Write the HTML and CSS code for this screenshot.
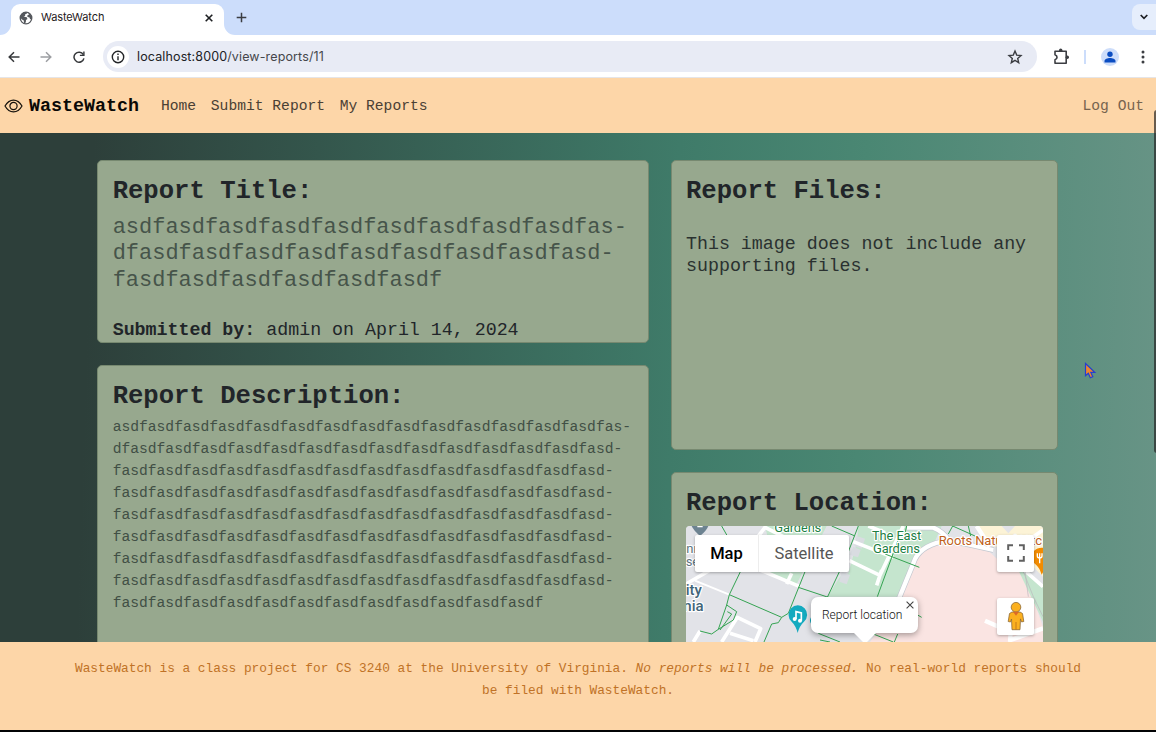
FILE: index.html
```html
<!DOCTYPE html>
<html lang="en">
<head>
<meta charset="utf-8">
<title>WasteWatch</title>
<link rel="stylesheet" href="styles.css">
</head>
<body>
<div class="tabstrip">
  <svg class="curve" width="11" height="11" viewBox="0 0 11 11"><path d="M11 0v11H0A11 11 0 0 0 11 0z" fill="#fff"/></svg>
  <div class="tab">
    <svg width="14" height="14" viewBox="0 0 14 14"><circle cx="7" cy="7" r="5.800" fill="#fff" stroke="#54575c" stroke-width="1.300"/><path d="M1 6.500C1.500 3 4 1 7.500 1L8 2.500 6 3.500 6.200 5 4.500 6H7.500L8.500 8 7 9 6.800 11.500 5 12.500 4.800 9.500 3 8.500zM9.500 1.800L12.500 5 12.800 8.500 11 8 10.500 6.500 8.500 6 8.200 4.500 9.800 3.800z" fill="#54575c"/></svg>
    <span class="tab-title">WasteWatch</span>
    <svg width="10" height="10" viewBox="0 0 10 10"><path d="M1.700 1.700l6.600 6.600M8.300 1.700L1.700 8.300" stroke="#1d1f22" stroke-width="1.600"/></svg>
  </div>
  <svg class="curve" width="11" height="11" viewBox="0 0 11 11"><path d="M0 0v11h11A11 11 0 0 1 0 0z" fill="#fff"/></svg>
  <svg class="plus" width="11" height="11" viewBox="0 0 11 11"><path d="M5.500.7v9.600M.7 5.500h9.600" stroke="#3b3d42" stroke-width="1.500"/></svg>
  <div class="tab-search"><svg width="10" height="8" viewBox="0 0 10 8"><path d="M1.700 2l3.300 3.300L8.300 2" fill="none" stroke="#1d1f22" stroke-width="1.700"/></svg></div>
</div>
<div class="toolbar">
  <svg class="back" width="12" height="12" viewBox="0 0 12 12"><path d="M11.500 6H1.500M6 1.200L1.200 6 6 10.800" fill="none" stroke="#36383b" stroke-width="1.500"/></svg>
  <svg class="forward" width="12" height="12" viewBox="0 0 12 12"><path d="M.5 6h10M6 1.200L10.800 6 6 10.800" fill="none" stroke="#9c9ea2" stroke-width="1.500"/></svg>
  <svg class="reload" width="12" height="12" viewBox="0 0 12 12"><path d="M10.300 3.600A5 5 0 1 0 10.900 7.300" fill="none" stroke="#36383b" stroke-width="1.500"/><path d="M11.600.4v4.700H6.900V3.700h3.300V.4z" fill="#36383b"/></svg>
  <div class="address">
    <span class="info"><svg width="14" height="14" viewBox="0 0 14 14"><circle cx="7" cy="7" r="5.700" fill="none" stroke="#222427" stroke-width="1.400"/><path d="M7 6.200v4M7 3.600V5" stroke="#222427" stroke-width="1.400"/></svg></span>
    <span class="url">localhost:8000<span class="path">/view-reports/11</span></span>
    <svg class="star" width="16" height="16" viewBox="0 0 16 16"><path d="M8 2.100l1.700 4 4.300.4-3.300 2.900 1 4.300L8 11.400l-3.700 2.300 1-4.300L2 6.500l4.300-.4z" fill="none" stroke="#3b3d42" stroke-width="1.400"/></svg>
  </div>
  <svg class="puzzle" width="17" height="17" viewBox="0 0 17 17"><path d="M2 3.300h11.200v11.900H2v-3.400C4.700 11 4.700 7.500 2 6.700z" fill="none" stroke="#3b3d42" stroke-width="1.600" stroke-linejoin="round"/><circle cx="7.700" cy="2.300" r="1.700" fill="#3b3d42"/><circle cx="14.300" cy="9.200" r="1.700" fill="#3b3d42"/></svg>
  <span class="divider"></span>
  <svg class="avatar" width="18" height="18" viewBox="0 0 18 18"><circle cx="9" cy="9" r="9" fill="#cdddfa"/><circle cx="9" cy="6.200" r="2.700" fill="#0b4dc2"/><path d="M3.500 14.500v-1.400C3.500 11 6.500 10 9 10s5.500 1 5.500 3.100v1.400z" fill="#0b4dc2"/></svg>
  <svg class="dots" width="4" height="14" viewBox="0 0 4 14"><g fill="#3b3d42"><circle cx="2" cy="2" r="1.500"/><circle cx="2" cy="7" r="1.500"/><circle cx="2" cy="12" r="1.500"/></g></svg>
</div>
<nav class="navbar">
  <svg class="eye" width="19" height="14" viewBox="0 0 19 14"><path d="M1 7C5.500-.9 13.500-.9 18 7 13.500 14.900 5.500 14.900 1 7z" fill="none" stroke="#16120c" stroke-width="1.200"/><circle cx="9.500" cy="7" r="3.600" fill="none" stroke="#16120c" stroke-width="1.200"/></svg>
  <span class="brand">WasteWatch</span>
  <span class="link">Home</span>
  <span class="link">Submit Report</span>
  <span class="link">My Reports</span>
  <span class="link logout">Log Out</span>
</nav>
<main class="page">
  <div class="column left">
    <section class="card title-card">
      <h2>Report Title:</h2>
      <p class="report-title">asdfasdfasdfasdfasdfasdfasdfasdfasdfas-<br>dfasdfasdfasdfasdfasdfasdfasdfasdfasd-<br>fasdfasdfasdfasdfasdfasdf</p>
      <p class="submitted"><b>Submitted by:</b> admin on April 14, 2024</p>
    </section>
    <section class="card desc-card">
      <h2>Report Description:</h2>
      <p class="description">asdfasdfasdfasdfasdfasdfasdfasdfasdfasdfasdfasdfasdfasdfas-<br>dfasdfasdfasdfasdfasdfasdfasdfasdfasdfasdfasdfasdfasdfasd-<br>fasdfasdfasdfasdfasdfasdfasdfasdfasdfasdfasdfasdfasdfasd-<br>fasdfasdfasdfasdfasdfasdfasdfasdfasdfasdfasdfasdfasdfasd-<br>fasdfasdfasdfasdfasdfasdfasdfasdfasdfasdfasdfasdfasdfasd-<br>fasdfasdfasdfasdfasdfasdfasdfasdfasdfasdfasdfasdfasdfasd-<br>fasdfasdfasdfasdfasdfasdfasdfasdfasdfasdfasdfasdfasdfasd-<br>fasdfasdfasdfasdfasdfasdfasdfasdfasdfasdfasdfasdfasdfasd-<br>fasdfasdfasdfasdfasdfasdfasdfasdfasdfasdfasdfasdf</p>
    </section>
  </div>
  <div class="column right">
    <section class="card files-card">
      <h2>Report Files:</h2>
      <p class="files">This image does not include any supporting files.</p>
    </section>
    <section class="card location-card">
      <h2>Report Location:</h2>
      <div class="map">
        <svg class="map-art" width="357" height="116" viewBox="138 288 1071 348">
          <rect x="138" y="288" width="1071" height="348" fill="#e2e3e8"/>
          <g fill="#c5e5ce">
            <path d="M375 288H560L470 462 360 424 385 330z"/>
            <path d="M655 288H905L880 345 825 390 775 500H562L600 440 625 430 650 340z"/>
          </g>
          <path d="M775 520L820 400Q840 360 900 342L1040 358 1085 400 1150 425 1209 590V636H690z" fill="#fae4e2"/>
          <path d="M1130 410L1209 470V575L1178 510z" fill="#c5e5ce"/>
          <path d="M1010 288H1209V440L1120 350 1060 350z" fill="#fcf3d6"/>
          <path d="M1085 288h40l-20 22z" fill="#e2e3e8"/>
          <path d="M650 318l25 8-10 30-22-8zM640 350l22 10-8 22-26-8zM605 425l25 10-10 28-22-8z" fill="#d9dce1"/>
          <g fill="none" stroke="#c3c8d0" stroke-width="17" stroke-linejoin="round">
            <path d="M775 510L820 400Q835 350 905 335M800 293L880 293Q910 305 925 330L1060 360"/>
          </g>
          <g fill="none" stroke="#fff" stroke-width="13" stroke-linejoin="round">
            <path d="M775 510L820 400Q835 350 905 335M800 293L880 293Q910 305 925 330L1060 360M1010 288L1050 350"/>
            <path d="M138 462L260 392M360 420L480 470M628 392L720 436 790 288M685 288L735 308M640 335L760 382M710 466L725 420M440 462L455 430M350 325L375 292 430 320M1130 400L1209 470M1180 320L1209 300" stroke-width="11"/>
            <path d="M160 636L180 603M245 636L292 562 362 596 345 636M270 610L340 632" stroke-width="11"/>
            <path d="M1035 572L1112 606 1110 636M1112 630L1209 595"/>
            <path d="M165 452L268 494" stroke-width="6"/>
          </g>
          <path d="M1150 425L1180 500 1209 560M1155 425L1165 500" fill="none" stroke="#b9b6bd" stroke-width="2"/>
          <g fill="none" stroke="#35a352" stroke-width="3">
            <path d="M245 288L262 318M318 390L268 494 260 525 235 598 215 612 180 603M268 494L425 562 445 550 495 425M260 525L290 545 280 570 235 598M262 545L275 552 240 600"/>
            <path d="M425 562L415 578 395 582 372 636M475 472L565 502M562 502L610 400M625 365L655 288M575 288L645 318M800 288L795 310M778 320L712 500M735 372L838 412M938 288L1005 318M938 288L925 312M985 288L992 318M535 610L600 636M540 630L570 636M700 612L760 636M773 612L763 636M815 545L845 562"/>
          </g>
          <path d="M155 288Q160 300 180 318 200 302 205 288z" fill="#6d8391"/><path d="M172 288h16v4h-16z" fill="#fff"/>
          <path d="M473 609Q468 588 455 575A28 28 0 1 1 492 575Q478 588 473 609z" fill="#14aabf"/>
          <path d="M468 567v-22l16 4v23" fill="none" stroke="#fff" stroke-width="5"/><circle cx="464" cy="567" r="6" fill="#fff"/><circle cx="480" cy="572" r="6" fill="#fff"/>
          <path d="M518 560Q508 570 516 581" fill="none" stroke="#14aabf" stroke-width="5"/>
          <path d="M1205 434Q1198 412 1188 404A30 28 0 1 1 1222 404z" fill="#f28b00"/>
          <path d="M1199 400V384M1192 370v8q0 6 7 6t7-6v-8M1199 370v12" fill="none" stroke="#fff" stroke-width="4"/>
          <g class="map-labels" font-size="39" stroke="#fff" stroke-width="7" stroke-linejoin="round" paint-order="stroke">
            <text x="403" y="305" fill="#1d7f43" textLength="141">Gardens</text>
            <text x="696" y="330" fill="#1d7f43" textLength="148">The East</text>
            <text x="699" y="368" fill="#1d7f43" textLength="141">Gardens</text>
            <text x="896" y="345" fill="#c0611b" textLength="310">Roots Natural Kitc</text>
            <text x="139" y="369" fill="#5d7480">nn</text>
            <text x="137" y="408" fill="#5d7480">se</text>
            <text x="137" y="495" fill="#426579" font-size="45" font-weight="500">ity</text>
            <text x="130" y="544" fill="#426579" font-size="45" font-weight="500">nia</text>
          </g>
        </svg>
        <div class="map-type"><span class="active">Map</span><span>Satellite</span></div>
        <div class="map-button fullscreen"><svg width="18" height="18" viewBox="0 0 18 18"><path d="M1.200 6V1.200H6M12 1.200h4.800V6M16.800 12v4.800H12M6 16.800H1.200V12" fill="none" stroke="#606060" stroke-width="2"/></svg></div>
        <div class="map-button pegman"><svg width="18" height="30" viewBox="0 0 18 30"><path d="M5 11h8l2.500 1.500 1.300 8-2.300.4-1-3-.5 10.800H5L4.500 18l-1 3-2.300-.5 1.300-8z" fill="#fbb01f" stroke="#8d6a38" stroke-width=".8"/><circle cx="9" cy="6.200" r="4.800" fill="#fbb01f" stroke="#8d6a38" stroke-width=".8"/><path d="M6 10.700h6l-3 4z" fill="#dc6927"/><path d="M9 21v8" stroke="#c47a1a"/></svg></div>
        <div class="bubble">Report location<svg class="bubble-close" width="8" height="8" viewBox="0 0 8 8"><path d="M.6.6l6.800 6.800M7.400.6L.6 7.400" stroke="#444" stroke-width="1.100"/></svg></div>
      </div>
    </section>
  </div>
  <svg class="cursor" width="13" height="18" viewBox="0 0 13 18"><path d="M1.500 1.500v12.200l2.800-2.400 2 4.500 2.500-1-2-4.400h4z" fill="#f0862e" stroke="#263ed0" stroke-width="1.200"/></svg>
</main>
<span class="scroll-thumb"></span>
<footer class="footer">WasteWatch is a class project for CS 3240 at the University of Virginia. <i>No reports will be processed.</i> No real-world reports should<br>be filed with WasteWatch.</footer>
</body>
</html>
```
FILE: styles.css
```css
* { box-sizing: border-box; }
body {
  margin: 0;
  height: 732px;
  display: flex;
  flex-direction: column;
  overflow: hidden;
  background: #fff;
  font-family: "Liberation Mono", monospace;
  font-size: 14.65px;
  line-height: 22px;
  color: #212529;
  border-bottom: 2px solid #030405;
}
svg { display: block; flex: none; }
h2, p { margin: 0; }

.tabstrip {
  height: 35px;
  flex: none;
  display: flex;
  align-items: flex-end;
  background: #ccddfb;
  font-family: Inter, sans-serif;
}
.tab {
  width: 213px;
  height: 31px;
  border-radius: 9px 9px 0 0;
  background: #fff;
  display: flex;
  align-items: center;
  padding: 0 10px 4px 8px;
}
.tab-title { margin: 0 auto 0 8px; padding-bottom: 1px; font-size: 11px; letter-spacing: -0.1px; color: #1f2023; }
.plus { margin: 0 auto 12px 1px; }
.tab-search {
  width: 24px;
  height: 26px;
  margin-bottom: 5px;
  border-radius: 8px 0 0 8px;
  background: #e6eefc;
  display: flex;
  align-items: center;
  justify-content: center;
}

.toolbar {
  height: 43px;
  flex: none;
  display: flex;
  align-items: center;
  border-bottom: 1px solid #e5e5e8;
  padding: 1px 11px 0 8px;
  font-family: Inter, sans-serif;
}
.forward { margin-left: 20px; }
.reload { margin-left: 21px; }
.address {
  width: 934px;
  height: 31px;
  margin-left: 18px;
  padding: 0 14px 0 4px;
  border-radius: 16px;
  background: #e8ebf5;
  display: flex;
  align-items: center;
}
.info {
  width: 22px;
  height: 22px;
  border-radius: 50%;
  background: #fff;
  display: flex;
  align-items: center;
  justify-content: center;
}
.url { margin: 0 auto 0 8px; font-size: 12.5px; letter-spacing: 0.13px; color: #202225; }
.path { color: #45474b; }
.puzzle { margin-left: 16px; }
.divider { width: 2px; height: 14px; margin: 0 15px 0 14px; background: #ccddfb; }
.dots { margin-left: auto; }

.navbar {
  height: 55px;
  flex: none;
  display: flex;
  align-items: center;
  background: #fdd6a8;
  padding: 0 12px 0 4px;
  color: #4a4034;
}
.brand { margin: 0 22px 0 6px; padding-top: 2px; font-size: 18.333px; font-weight: bold; color: #0b0906; }
.link { margin-right: 14.667px; }
.logout { margin: 0 0 0 auto; color: #77644f; }

.page {
  position: relative;
  flex: 1;
  min-height: 0;
  overflow: hidden;
  display: flex;
  gap: 22px;
  padding: 27px 98px 0 97px;
  background: linear-gradient(92deg, #2d3f3a 8%, #3f7b69 58%, #4a8773 74%, #689486 100%);
}
.column { display: flex; flex-direction: column; gap: 22px; }
.left { width: 552px; flex: none; }
.right { width: 387px; flex: none; }
.card {
  flex: none;
  border: 1px solid #778970;
  border-radius: 5px;
  background: #97a88e;
  padding: 16px 14px 0 14.667px;
}
.card h2 { font-size: 25.6px; line-height: 30.8px; font-weight: bold; }
.title-card { height: 183px; }
.report-title { margin-top: 7px; font-size: 21.97px; line-height: 26.4px; color: #46544a; }
.submitted { margin-top: 25px; font-size: 18.3px; }
.desc-card { height: 330px; }
.description { margin-top: 3px; color: #414f45; }
.right .card { padding-left: 14px; }
.files-card { height: 290px; }
.files { margin-top: 25px; font-size: 18.3px; color: #2a3130; }
.location-card { height: 330px; }

.map {
  position: relative;
  width: 357px;
  height: 200px;
  margin-top: 6px;
  border-radius: 4px 4px 0 0;
  overflow: hidden;
  background: #e2e3e8;
  font-family: Roboto, sans-serif;
}
.map-type {
  position: absolute;
  left: 9px;
  top: 9px;
  height: 37px;
  display: flex;
  font-size: 16.5px;
  line-height: 37px;
  text-align: center;
  color: #565656;
  background: #fff;
  border-radius: 2px;
  box-shadow: 0 1px 3px rgba(0, 0, 0, 0.3);
}
.map-type span { width: 90px; }
.map-type .active { width: 64px; font-weight: 500; color: #000; border-right: 1px solid #ededed; }
.map-button {
  position: absolute;
  left: 311px;
  width: 37px;
  height: 37px;
  border-radius: 2px;
  background: #fff;
  box-shadow: 0 1px 3px rgba(0, 0, 0, 0.3);
  display: flex;
  align-items: center;
  justify-content: center;
}
.fullscreen { top: 9px; }
.pegman { top: 72px; }
.bubble {
  position: absolute;
  left: 125px;
  top: 71px;
  width: 107px;
  height: 36px;
  padding-left: 11px;
  border-radius: 7px;
  background: #fff;
  box-shadow: 0 2px 6px rgba(0, 0, 0, 0.35);
  font-size: 12px;
  font-weight: 300;
  line-height: 36px;
  color: #111;
}
.bubble::after {
  content: "";
  position: absolute;
  left: 42px;
  top: 35px;
  border: 12px solid transparent;
  border-top-color: #fff;
  border-bottom: 0;
}
.bubble-close { position: absolute; right: 4px; top: 4px; }
.cursor { position: absolute; left: 1084px; top: 229px; }
.scroll-thumb {
  position: absolute;
  left: 1154px;
  top: 110px;
  width: 4px;
  height: 343px;
  border-radius: 3px 0 0 3px;
  background: rgba(40, 40, 40, 0.7);
}
.footer {
  height: 88px;
  flex: none;
  padding-top: 16px;
  background: #fdd6a8;
  text-align: center;
  font-size: 12.81px;
  color: #c07226;
}
```
